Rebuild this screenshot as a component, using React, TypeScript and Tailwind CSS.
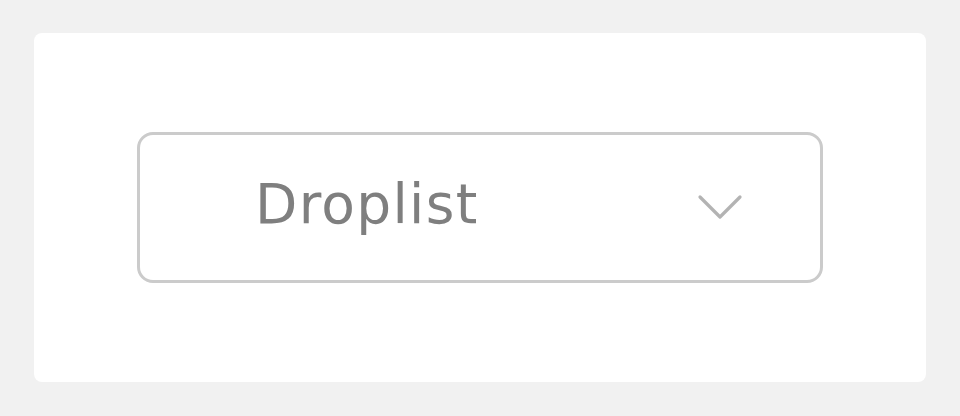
export default function App() {
  return (
    <div className="w-[960px] h-[416px] bg-[#f1f1f1] pt-[33px] pl-[34px]">
      <div className="w-[892px] h-[349px] bg-white rounded-[8px] flex items-center justify-center">
        <button className="w-[686px] h-[151px] border-[3px] border-[#cbcbcb] rounded-[16px] flex items-center justify-between pl-[115px] pr-[77px] bg-white">
          <span
            className="text-[55px] leading-none text-[#7f7f7f] tracking-[1.3px] pb-[6px]"
            style={{ fontFamily: '"DejaVu Sans", sans-serif' }}
          >
            Droplist
          </span>
          <svg width="46" height="27" viewBox="0 0 46 27" fill="none">
            <path
              d="M3 3 L23 23 L43 3"
              stroke="#b3b3b3"
              strokeWidth="3.2"
              strokeLinecap="round"
              strokeLinejoin="round"
            />
          </svg>
        </button>
      </div>
    </div>
  );
}
